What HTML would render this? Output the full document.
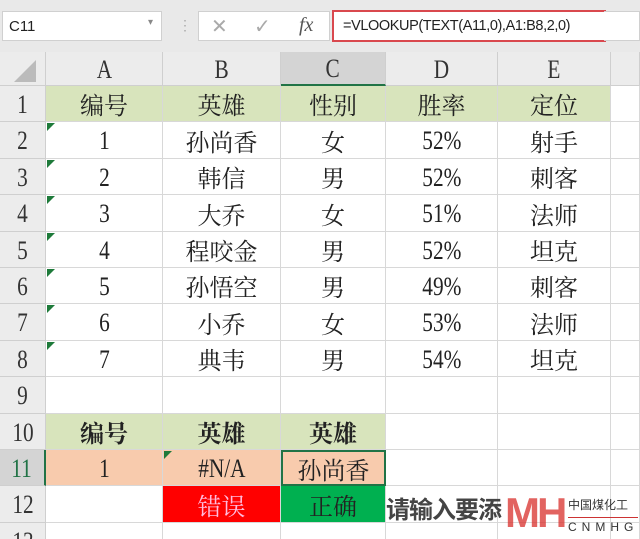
<!DOCTYPE html>
<html><head><meta charset="utf-8"><style>
*{margin:0;padding:0;box-sizing:border-box}
html,body{width:640px;height:539px;overflow:hidden}
body{background:#fff;position:relative;font-family:"Liberation Serif","Noto Serif CJK SC",serif}
.top{position:absolute;left:0;top:0;width:640px;height:52px;background:#e9e9e9}
.nb{position:absolute;left:2px;top:11px;width:160px;height:30px;background:#fff;border:1px solid #d0d0d0;font:15px "Liberation Sans",sans-serif;padding:6px 6px;color:#222}
.fx{position:absolute;left:198px;top:11px;width:132px;height:30px;background:#fff;border:1px solid #d0d0d0;color:#aaa;font:20px "Liberation Sans",sans-serif}
.fb{position:absolute;left:332px;top:10px;width:274px;height:32px;background:#fff;border:2px solid #d9484e;font:14.5px "Liberation Sans",sans-serif;letter-spacing:-0.4px;padding:6px 9px;color:#222;white-space:nowrap;overflow:hidden}
.fbr{position:absolute;left:604px;top:11px;width:36px;height:30px;background:#fff;border:1px solid #d0d0d0;border-left:none}
.c{position:absolute;display:flex;align-items:center;justify-content:center;font-size:24px;color:#222;border-right:1px solid #d8d8d8;border-bottom:1px solid #d8d8d8}
.n{display:inline-block;padding-top:2px;font-size:26px;transform:scaleX(.82)}
.h{background:#ececec;color:#333;font-size:24px;border-color:#cfcfcf}
.tri{position:absolute;width:0;height:0;border-top:8px solid #1e7a3a;border-right:8px solid transparent}
</style></head><body>
<div class="top">
<div class="nb">C11<span style="position:absolute;right:8px;top:5px;color:#888;font-size:10px">▾</span></div>
<div style="position:absolute;left:178px;top:17px;color:#aaa;font:14px sans-serif">⋮</div>
<div class="fx"><span style="position:absolute;left:12px;top:2px">✕</span><span style="position:absolute;left:55px;top:2px">✓</span><span style="position:absolute;left:100px;top:2px;color:#555;font-style:italic;font-family:'Liberation Serif',serif">fx</span></div>
<div class="fb">=VLOOKUP(TEXT(A11,0),A1:B8,2,0)</div>
<div class="fbr"></div>
</div>
<div id="g"></div>
<div style="position:absolute;left:386px;top:490px;font-size:24px;font-weight:bold;color:#444;font-family:'Liberation Sans','Noto Sans CJK SC',sans-serif;letter-spacing:-1px">请输入要添</div>
<div style="position:absolute;left:505px;top:489px;font:bold 42px 'Liberation Sans',sans-serif;color:#d9302c;opacity:.75;letter-spacing:-3px">MH</div>
<div style="position:absolute;left:568px;top:496px;font:12px 'Noto Sans CJK SC',sans-serif;color:#333">中国煤化工</div>
<div style="position:absolute;left:568px;top:517px;width:70px;border-top:1px solid #c33"></div>
<div style="position:absolute;left:568px;top:520px;font:12px 'Liberation Sans',sans-serif;color:#333;letter-spacing:5px">CNMHG</div>
<script>
var X=[0,46,163,281,386,498,611,640],T=86,R=36.4,H='';
function cell(x1,x2,y1,y2,t,st,cls){var inner=/^[0-9#%A-Z\/]+$/.test(String(t))?'<span class="n">'+t+'</span>':t;H+='<div class="c '+(cls||'')+'" style="left:'+x1+'px;top:'+y1+'px;width:'+(x2-x1)+'px;height:'+(y2-y1)+'px;'+(st||'')+'">'+inner+'</div>';}
cell(0,46,52,86,'','','h');
H+='<div style="position:absolute;left:14px;top:60px;width:0;height:0;border-bottom:22px solid #bbb;border-left:22px solid transparent"></div>';
var L=['A','B','C','D','E',''];
for(var i=1;i<7;i++)cell(X[i],X[i+1],52,86,L[i-1],i==3?'background:#d4d4d4;border-bottom:2px solid #217346':'', 'h');
var d=[['编号','英雄','性别','胜率','定位'],['1','孙尚香','女','52%','射手'],['2','韩信','男','52%','刺客'],['3','大乔','女','51%','法师'],['4','程咬金','男','52%','坦克'],['5','孙悟空','男','49%','刺客'],['6','小乔','女','53%','法师'],['7','典韦','男','54%','坦克']];
for(var r=1;r<=13;r++){var y1=Math.round(T+(r-1)*R),y2=Math.round(T+r*R);
cell(0,46,y1,y2,String(r),r==11?'color:#217346;background:#d4d4d4;border-right:2px solid #217346':'','h');
for(var c=1;c<7;c++){var t='',st='';
if(r<=8&&c<=5){t=d[r-1][c-1];if(r==1)st='background:#d8e4bc';}
if(r==10&&c<=3){t=['编号','英雄','英雄'][c-1];st='background:#d8e4bc;font-weight:bold';}
if(r==11&&c<=3){t=['1','#N/A','孙尚香'][c-1];st='background:#f8cbad';if(c==3)st+=';border:2px solid #217346';}
if(r==12&&c==2){t='错误';st='background:#ff0000;color:#fbd';}
if(r==12&&c==3){t='正确';st='background:#00b050;color:#222';}
cell(X[c],X[c+1],y1,y2,t,st);}
if(r>=2&&r<=8)H+='<div class="tri" style="left:47px;top:'+(y1+1)+'px"></div>';
if(r==11)H+='<div class="tri" style="left:164px;top:'+(y1+1)+'px"></div>';}
document.getElementById('g').innerHTML=H;
</script>
</body></html>
